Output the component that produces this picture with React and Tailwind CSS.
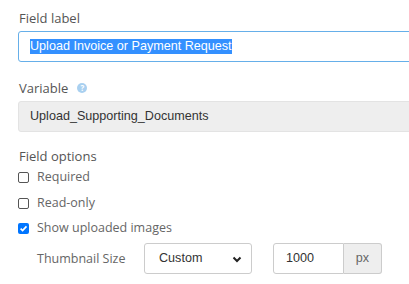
import React from "react";

const label = "text-[13px] text-[#555] leading-[18px]";
const option = "text-[12.5px] text-[#666] leading-[18px]";
const arial = { fontFamily: "'Liberation Sans', Arial, sans-serif" };

function Box({ checked }) {
  return checked ? (
    <span className="flex h-[11px] w-[11px] items-center justify-center rounded-[2px] bg-[#0075ff]">
      <svg width="9" height="9" viewBox="0 0 10 10">
        <path d="M1.8 5.2 L4 7.4 L8.3 2.6" fill="none" stroke="#fff" strokeWidth="1.8" />
      </svg>
    </span>
  ) : (
    <span className="h-[11px] w-[11px] rounded-[2px] border border-[#555] bg-white" />
  );
}

function Check({ text, checked, className }) {
  return (
    <div className={`flex items-center gap-[8px] ${className}`}>
      <Box checked={checked} />
      <span className={option}>{text}</span>
    </div>
  );
}

export default function App() {
  return (
    <div
      className="h-[284px] w-[409px] overflow-hidden bg-white pl-[18px] pt-[9px]"
      style={{ fontFamily: "'Open Sans', sans-serif" }}
    >
      <div className={`${label} pl-[1px]`}>Field label</div>
      <div
        className="mt-[4px] flex h-[31px] w-[420px] items-center rounded-[3px] border border-[#66afe9] pl-[11px]"
        style={arial}
      >
        <span className="bg-[#3390ff] text-[12.6px] leading-[15px] text-white">
          Upload Invoice or Payment Request
        </span>
      </div>

      <div className="mt-[17px] flex items-center gap-[9px] pl-[1px]">
        <span className={label}>Variable</span>
        <span className="flex h-[10px] w-[10px] items-center justify-center rounded-full bg-[#a9d0f0] text-[8px] font-bold leading-none text-white">
          ?
        </span>
      </div>
      <div
        className="mt-[4px] flex h-[31px] w-[420px] items-center rounded-[3px] border border-[#e3e3e3] bg-[#eeeeee] pl-[11px] text-[12.6px] text-[#333]"
        style={arial}
      >
        Upload_Supporting_Documents
      </div>

      <div className={`${label} mt-[15px] pl-[1px]`}>Field options</div>
      <Check text="Required" className="mt-[3px]" />
      <Check text="Read-only" className="mt-[8px]" />
      <Check text="Show uploaded images" checked className="mt-[7px]" />

      <div className="mt-[6px] flex items-center pl-[19px]">
        <span className={`${option} w-[107px]`}>Thumbnail Size</span>
        <div
          className="relative flex h-[31px] w-[108px] items-center rounded-[3px] border border-[#ccc] pl-[14px] text-[12.6px] text-[#333]"
          style={arial}
        >
          Custom
          <svg className="absolute right-[9px] top-[12px]" width="10" height="7" viewBox="0 0 10 7">
            <path d="M1.5 1.5 L5 5 L8.5 1.5" fill="none" stroke="#222" strokeWidth="2" />
          </svg>
        </div>
        <div className="ml-[21px] flex h-[31px]" style={arial}>
          <div className="flex w-[71px] items-center rounded-l-[3px] border border-[#ccc] pl-[12px] text-[12.6px] text-[#333]">
            1000
          </div>
          <div className="flex w-[38px] items-center justify-center rounded-r-[3px] border border-l-0 border-[#ccc] bg-[#eee] text-[12.6px] text-[#666]">
            px
          </div>
        </div>
      </div>
    </div>
  );
}
